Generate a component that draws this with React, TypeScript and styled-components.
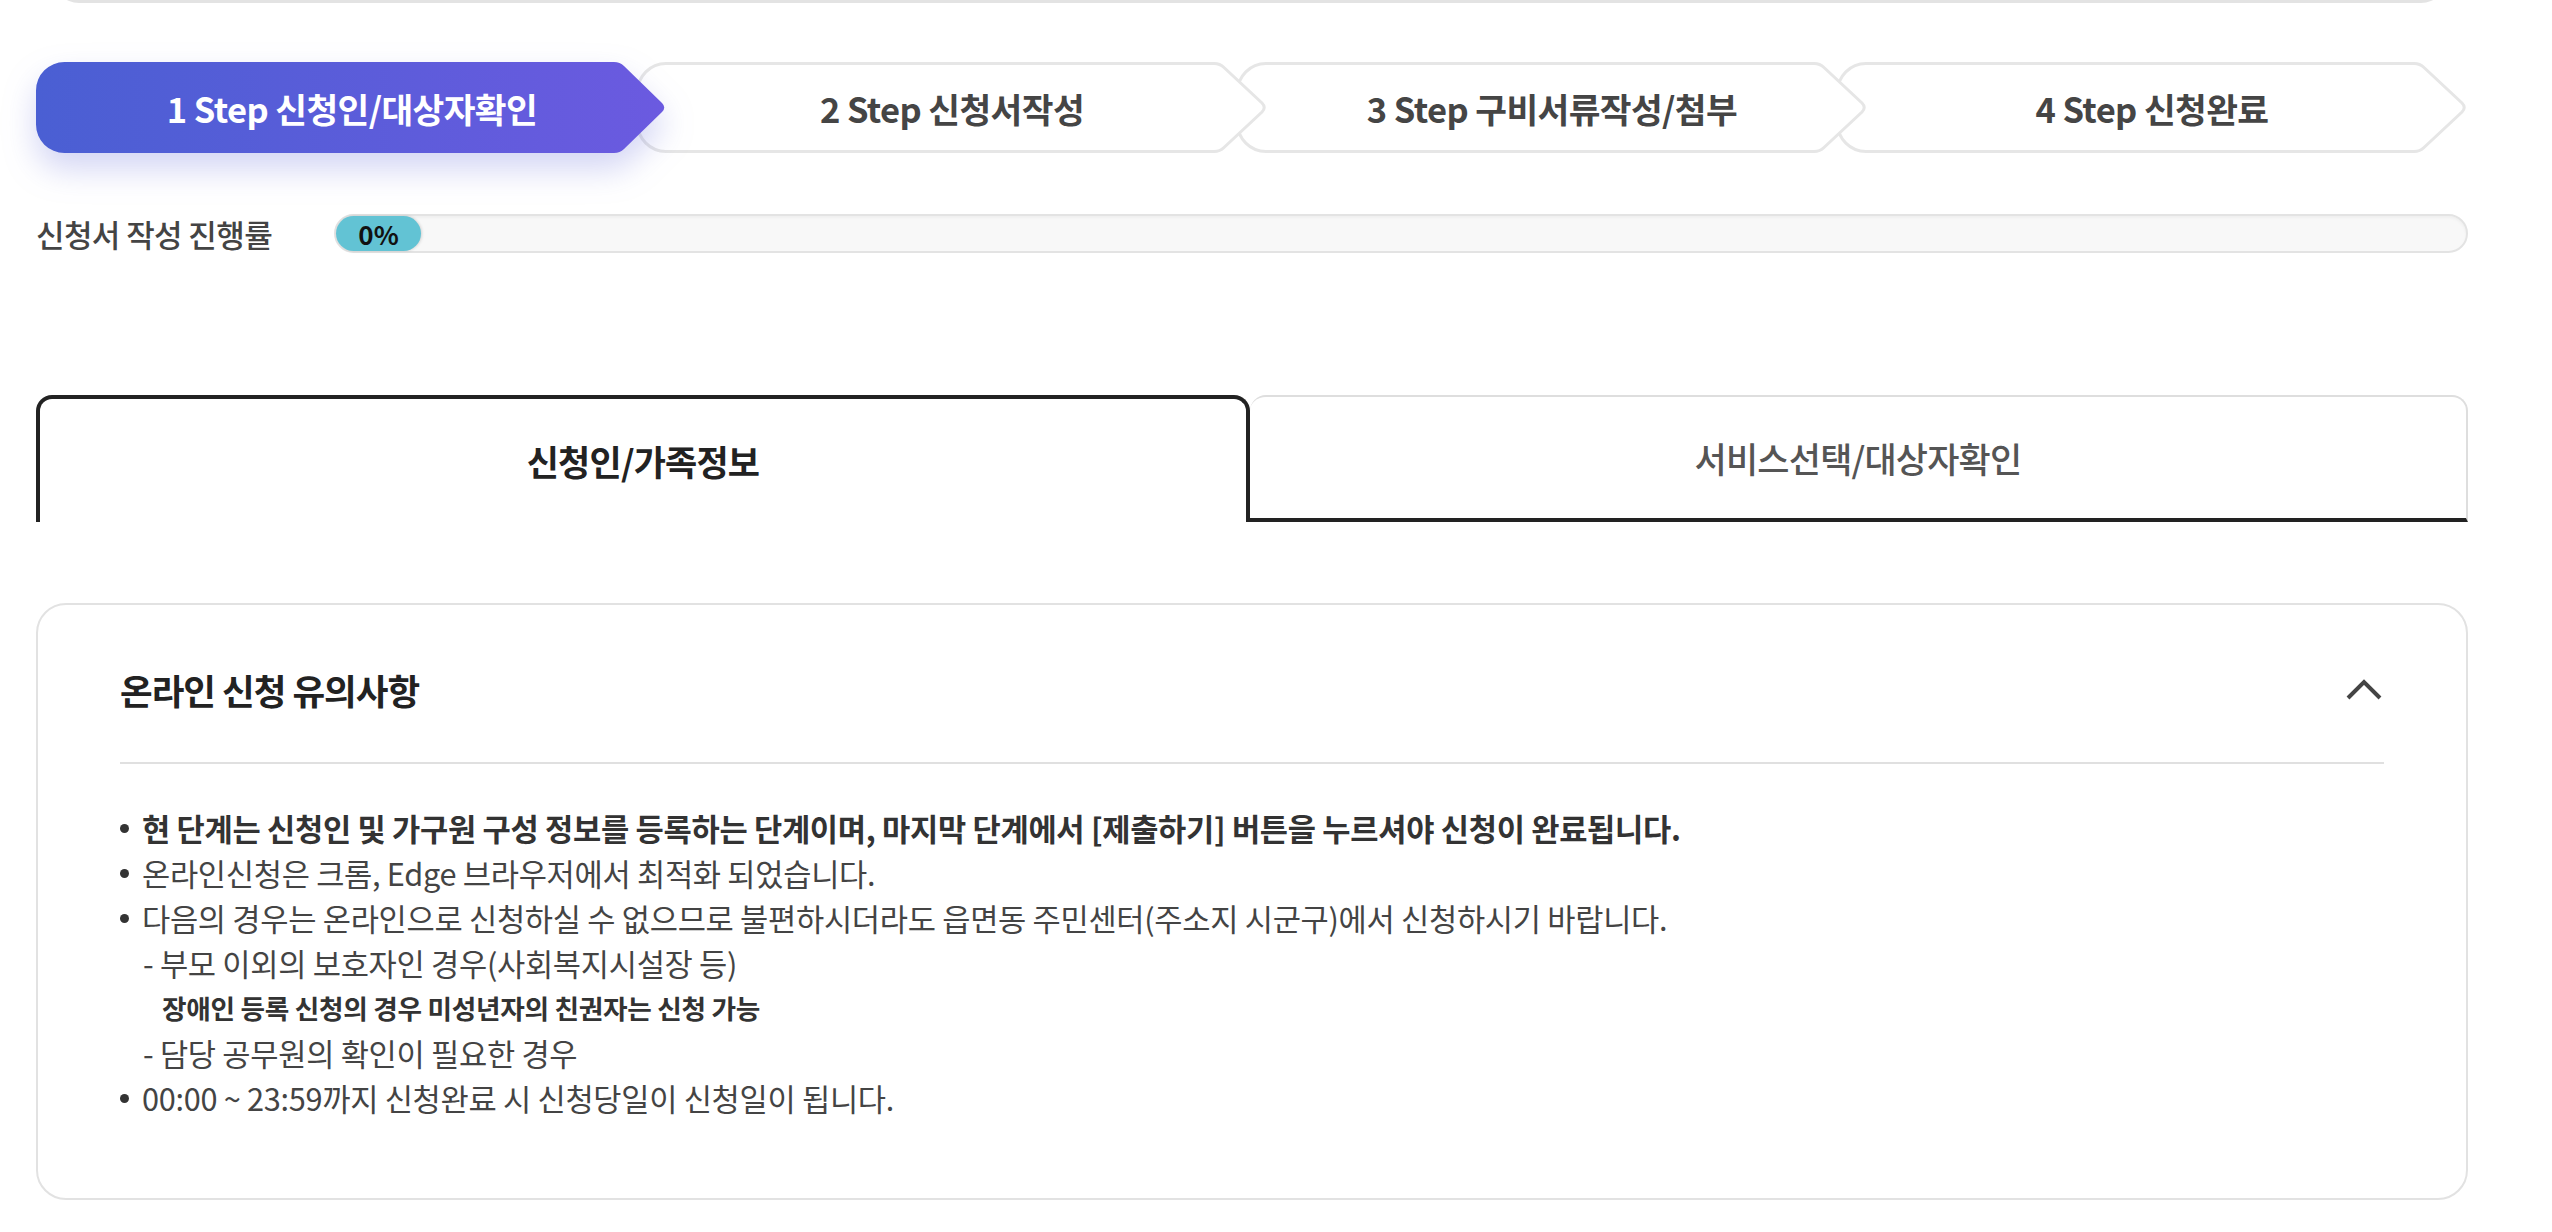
import React from 'react';
import styled, { createGlobalStyle } from 'styled-components';

const GlobalStyle = createGlobalStyle`
  html, body {
    margin: 0;
    padding: 0;
    background: #fff;
  }
  body {
    font-family: "Noto Sans CJK KR", "Noto Sans", sans-serif;
    color: #444;
  }
`;

const Page = styled.div`
  display: flex;
  flex-direction: column;
  width: 2432px;
  padding: 0 0 40px 36px;
`;

const TopEdge = styled.div`
  height: 24px;
  margin: -24px 21px 0 17px;
  border: 3px solid #e3e3e3;
  border-top: 0;
  border-radius: 0 0 26px 26px;
`;

const Steps = styled.ol`
  display: flex;
  margin: 59px 0 0;
  padding: 0;
  list-style: none;
`;

const Step = styled.li<{ $z: number }>`
  position: relative;
  z-index: ${({ $z }) => $z};
  flex: none;
  width: 632px;
  height: 91px;
  display: flex;
  align-items: center;
  justify-content: center;

  & + & {
    margin-left: -32px;
  }
`;

const StepShape = styled.svg<{ $active: boolean }>`
  position: absolute;
  inset: 0;
  overflow: visible;
  filter: ${({ $active }) => ($active ? 'drop-shadow(0 16px 16px rgba(84, 92, 214, 0.26))' : 'none')};
`;

const StepLabel = styled.span<{ $active: boolean }>`
  position: relative;
  font-size: 34.5px;
  font-weight: ${({ $active }) => ($active ? 700 : 600)};
  letter-spacing: -0.6px;
  color: ${({ $active }) => ($active ? '#fff' : '#454545')};
`;

const ProgressRow = styled.div`
  display: flex;
  align-items: center;
  margin-top: 61px;
  height: 39px;
`;

const ProgressLabel = styled.span`
  flex: none;
  width: 298px;
  font-size: 31px;
  font-weight: 500;
  letter-spacing: -0.6px;
  color: #444;
`;

const ProgressTrack = styled.div`
  flex: 1;
  height: 39px;
  box-sizing: border-box;
  border: 2px solid #e3e3e3;
  border-radius: 20px;
  background: #f8f8f8;
  box-shadow: inset 0 2px 3px rgba(0, 0, 0, 0.04);
  display: flex;
`;

const ProgressFill = styled.div`
  width: 85px;
  height: 100%;
  border-radius: 18px;
  background: #62c3d4;
  box-shadow: 1px 0 3px rgba(0, 0, 0, 0.15);
  display: flex;
  align-items: center;
  justify-content: center;
  font-size: 26px;
  font-weight: 700;
  color: #111;
`;

const Tabs = styled.div`
  display: grid;
  grid-template-columns: 1214px 1fr;
  height: 127px;
  margin-top: 142px;
`;

const Tab = styled.button<{ $active: boolean }>`
  display: flex;
  align-items: center;
  justify-content: center;
  box-sizing: border-box;
  margin: 0;
  padding: 0;
  background: #fff;
  font-family: inherit;
  font-size: 35px;
  letter-spacing: -0.8px;
  font-weight: ${({ $active }) => ($active ? 700 : 500)};
  color: ${({ $active }) => ($active ? '#222' : '#555')};
  border: ${({ $active }) => ($active ? '4px solid #222' : '2px solid #dedede')};
  border-bottom: ${({ $active }) => ($active ? '0' : '4px solid #222')};
  border-left: ${({ $active }) => ($active ? '4px solid #222' : '0')};
  border-radius: 16px 16px 0 0;
  cursor: pointer;
`;

const Card = styled.section`
  margin-top: 81px;
  border: 2px solid #e2e2e2;
  border-radius: 30px;
  padding: 0 82px 78px;
`;

const CardHeader = styled.div`
  display: flex;
  align-items: center;
  justify-content: space-between;
  padding: 65px 0 52px;
  border-bottom: 2px solid #e0e0e0;
`;

const CardTitle = styled.h3`
  margin: 0;
  font-size: 35.5px;
  line-height: 40px;
  font-weight: 700;
  letter-spacing: -1px;
  color: #222;
`;

const Toggle = styled.button`
  display: flex;
  align-items: center;
  justify-content: center;
  width: 40px;
  height: 40px;
  margin: 0;
  padding: 0;
  border: 0;
  background: none;
  cursor: pointer;
`;

const Notes = styled.ul`
  margin: 41px 0 0;
  padding: 0;
  list-style: none;
`;

const Note = styled.li<{ $bold?: boolean }>`
  position: relative;
  padding-left: 22px;
  font-size: 30.7px;
  line-height: 45px;
  letter-spacing: -0.3px;
  font-weight: ${({ $bold }) => ($bold ? 700 : 400)};
  color: ${({ $bold }) => ($bold ? '#333' : '#444')};

  &::before {
    content: '';
    position: absolute;
    left: 0;
    top: 19px;
    width: 9px;
    height: 9px;
    border-radius: 50%;
    background: #333;
  }
`;

const SubNote = styled.div<{ $strong?: boolean }>`
  padding-left: ${({ $strong }) => ($strong ? '20px' : '1px')};
  font-size: ${({ $strong }) => ($strong ? '26.7px' : '30.7px')};
  font-weight: ${({ $strong }) => ($strong ? 700 : 400)};
  color: ${({ $strong }) => ($strong ? '#333' : '#444')};
  line-height: 45px;
  letter-spacing: -0.3px;
`;

const W = 632;
const H = 91;

const stepPath = (inset: number) => {
  const s = inset;
  const r = 28.5;
  const top = s;
  const bottom = H - s;
  const mid = H / 2;
  return [
    `M ${r + s} ${top}`,
    `H ${W - 54}`,
    `Q ${W - 48} ${top} ${W - 44} ${top + 4}`,
    `L ${W - 6} ${mid - 4.5}`,
    `Q ${W - 1.5} ${mid} ${W - 6} ${mid + 4.5}`,
    `L ${W - 44} ${bottom - 4}`,
    `Q ${W - 48} ${bottom} ${W - 54} ${bottom}`,
    `H ${r + s}`,
    `A ${r} ${r} 0 0 1 ${s} ${bottom - r}`,
    `V ${top + r}`,
    `A ${r} ${r} 0 0 1 ${r + s} ${top}`,
    'Z',
  ].join(' ');
};

const steps = [
  '1 Step 신청인/대상자확인',
  '2 Step 신청서작성',
  '3 Step 구비서류작성/첨부',
  '4 Step 신청완료',
];

export default function App() {
  return (
    <>
      <GlobalStyle />
      <Page>
        <TopEdge />

        <Steps>
          {steps.map((label, i) => {
            const active = i === 0;
            return (
              <Step key={label} $z={10 - i}>
                <StepShape $active={active} width={W} height={H} viewBox={`0 0 ${W} ${H}`}>
                  {active ? (
                    <>
                      <defs>
                        <linearGradient id="stepActive" x1="0" y1="0" x2="1" y2="0">
                          <stop offset="0" stopColor="#4a5fd3" />
                          <stop offset="1" stopColor="#6b5ae0" />
                        </linearGradient>
                      </defs>
                      <path d={stepPath(0)} fill="url(#stepActive)" />
                    </>
                  ) : (
                    <path d={stepPath(1.5)} fill="#fff" stroke="#e6e6e6" strokeWidth={3} />
                  )}
                </StepShape>
                <StepLabel $active={active}>{label}</StepLabel>
              </Step>
            );
          })}
        </Steps>

        <ProgressRow>
          <ProgressLabel>신청서 작성 진행률</ProgressLabel>
          <ProgressTrack>
            <ProgressFill>0%</ProgressFill>
          </ProgressTrack>
        </ProgressRow>

        <Tabs>
          <Tab $active>신청인/가족정보</Tab>
          <Tab $active={false}>서비스선택/대상자확인</Tab>
        </Tabs>

        <Card>
          <CardHeader>
            <CardTitle>온라인 신청 유의사항</CardTitle>
            <Toggle aria-label="접기">
              <svg width="40" height="24" viewBox="0 0 40 24">
                <polyline points="4,20 20,4 36,20" fill="none" stroke="#444" strokeWidth="4" />
              </svg>
            </Toggle>
          </CardHeader>
          <Notes>
            <Note $bold>
              현 단계는 신청인 및 가구원 구성 정보를 등록하는 단계이며, 마지막 단계에서 [제출하기] 버튼을 누르셔야 신청이 완료됩니다.
            </Note>
            <Note>온라인신청은 크롬, Edge 브라우저에서 최적화 되었습니다.</Note>
            <Note>
              다음의 경우는 온라인으로 신청하실 수 없으므로 불편하시더라도 읍면동 주민센터(주소지 시군구)에서 신청하시기 바랍니다.
              <SubNote>- 부모 이외의 보호자인 경우(사회복지시설장 등)</SubNote>
              <SubNote $strong>장애인 등록 신청의 경우 미성년자의 친권자는 신청 가능</SubNote>
              <SubNote>- 담당 공무원의 확인이 필요한 경우</SubNote>
            </Note>
            <Note>00:00 ~ 23:59까지 신청완료 시 신청당일이 신청일이 됩니다.</Note>
          </Notes>
        </Card>
      </Page>
    </>
  );
}
